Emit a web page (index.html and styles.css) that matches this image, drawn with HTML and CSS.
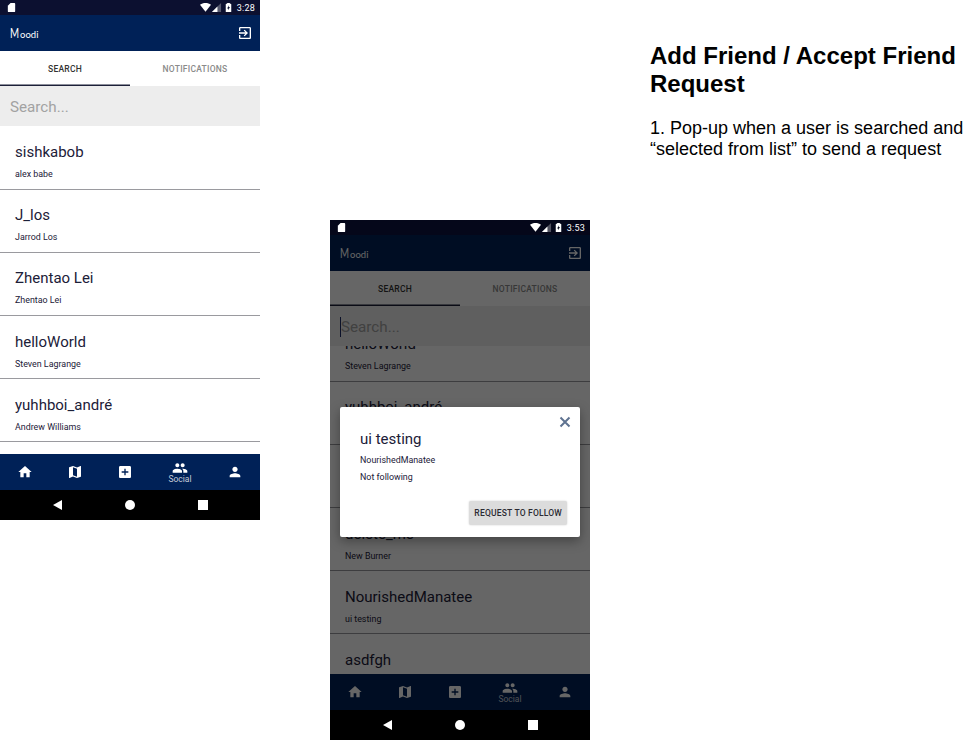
FILE: index.html
```html
<!DOCTYPE html>
<html lang="en">
<head>
    <meta charset="UTF-8">
    <meta name="viewport" content="width=device-width, initial-scale=1.0">
    <title>Add Friend / Accept Friend Request</title>
    <link rel="stylesheet" href="styles.css">
</head>
<body>
    <svg class="icon-defs" width="0" height="0">
        <symbol id="i-sd" viewBox="0 0 24 24"><path d="M18 2h-8L4 8v12c0 1.100.9 2 2 2h12c1.100 0 2-.9 2-2V4c0-1.100-.9-2-2-2z"/></symbol>
        <symbol id="i-wifi" viewBox="0 0 24 24"><path d="M12 21 24 6C20.500 3.300 16.500 2 12 2S3.500 3.300 0 6z"/></symbol>
        <symbol id="i-signal" viewBox="0 0 24 24"><path d="M2 22h20V2z" opacity=".3"/><path d="M2 22h12V10z"/></symbol>
        <symbol id="i-battery" viewBox="0 0 24 24"><path fill-rule="evenodd" d="M9 2h6v2h2c.6 0 1 .4 1 1v16c0 .6-.4 1-1 1H7c-.6 0-1-.4-1-1V5c0-.6.4-1 1-1h2zm4 5-4 7h2.500v4l3.500-7h-2.500z"/></symbol>
        <symbol id="i-exit" viewBox="0 0 24 24"><path d="M10.090 15.590 11.500 17l5-5-5-5-1.410 1.410L12.670 11H3v2h9.670l-2.580 2.590zM19 3H5c-1.110 0-2 .9-2 2v4h2V5h14v14H5v-4H3v4c0 1.100.89 2 2 2h14c1.100 0 2-.9 2-2V5c0-1.100-.9-2-2-2z"/></symbol>
        <symbol id="i-home" viewBox="0 0 24 24"><path d="M10 20v-6h4v6h5v-8h3L12 3 2 12h3v8z"/></symbol>
        <symbol id="i-map" viewBox="0 0 24 24"><path fill-rule="evenodd" d="m20.500 3-.16.03L15 5.100 9 3 3.360 4.900c-.21.070-.36.250-.36.480V20.500c0 .28.220.5.5.5l.16-.03L9 18.900l6 2.100 5.640-1.900c.21-.070.360-.25.360-.48V3.500c0-.28-.22-.5-.5-.5zM15 19l-6-2.110V5l6 2.110z"/></symbol>
        <symbol id="i-add" viewBox="0 0 24 24"><path d="M19 3H5c-1.110 0-2 .9-2 2v14c0 1.100.89 2 2 2h14c1.100 0 2-.9 2-2V5c0-1.100-.9-2-2-2zm-2 10h-4v4h-2v-4H7v-2h4V7h2v4h4v2z"/></symbol>
        <symbol id="i-people" viewBox="0 0 24 24"><path d="M16 11c1.660 0 2.990-1.340 2.990-3S17.660 5 16 5c-1.660 0-3 1.340-3 3s1.340 3 3 3zm-8 0c1.660 0 2.990-1.340 2.990-3S9.660 5 8 5C6.340 5 5 6.340 5 8s1.340 3 3 3zm0 2c-2.330 0-7 1.170-7 3.500V19h14v-2.500c0-2.330-4.670-3.500-7-3.500zm8 0c-.29 0-.62.020-.97.050 1.160.84 1.970 1.970 1.970 3.450V19h6v-2.500c0-2.330-4.670-3.500-7-3.500z"/></symbol>
        <symbol id="i-person" viewBox="0 0 24 24"><path d="M12 12c2.210 0 4-1.790 4-4s-1.790-4-4-4-4 1.790-4 4 1.790 4 4 4zm0 2c-2.670 0-8 1.340-8 4v2h16v-2c0-2.660-5.330-4-8-4z"/></symbol>
    </svg>

    <div class="board">
        <section class="phone">
            <div class="status-bar">
                <svg class="sd"><use href="#i-sd"/></svg>
                <span class="status-right">
                    <svg class="wifi"><use href="#i-wifi"/></svg>
                    <svg class="signal"><use href="#i-signal"/></svg>
                    <svg class="battery"><use href="#i-battery"/></svg>
                    <span class="clock">3:28</span>
                </span>
            </div>
            <header class="app-bar">
                <span class="logo"><span class="logo-m">M</span>oodi</span>
                <svg class="exit"><use href="#i-exit"/></svg>
            </header>
            <nav class="tabs">
                <span class="tab tab-active">SEARCH</span>
                <span class="tab">NOTIFICATIONS</span>
            </nav>
            <div class="search"><span class="search-text">Search...</span></div>
            <ul class="results">
                <li class="row"><div class="row-name">sishkabob</div><div class="row-sub">alex babe</div></li>
                <li class="row"><div class="row-name">J_los</div><div class="row-sub">Jarrod Los</div></li>
                <li class="row"><div class="row-name">Zhentao Lei</div><div class="row-sub">Zhentao Lei</div></li>
                <li class="row"><div class="row-name">helloWorld</div><div class="row-sub">Steven Lagrange</div></li>
                <li class="row"><div class="row-name">yuhhboi_andré</div><div class="row-sub">Andrew Williams</div></li>
            </ul>
            <nav class="bottom-nav">
                <span class="nav-item"><svg><use href="#i-home"/></svg></span>
                <span class="nav-item"><svg><use href="#i-map"/></svg></span>
                <span class="nav-item"><svg><use href="#i-add"/></svg></span>
                <span class="nav-item nav-social"><svg><use href="#i-people"/></svg><span class="nav-label">Social</span></span>
                <span class="nav-item"><svg><use href="#i-person"/></svg></span>
            </nav>
            <div class="system-nav">
                <span class="sys-back"></span>
                <span class="sys-home"></span>
                <span class="sys-recent"></span>
            </div>
        </section>

        <section class="phone phone-dimmed">
            <div class="status-bar">
                <svg class="sd"><use href="#i-sd"/></svg>
                <span class="status-right">
                    <svg class="wifi"><use href="#i-wifi"/></svg>
                    <svg class="signal"><use href="#i-signal"/></svg>
                    <svg class="battery"><use href="#i-battery"/></svg>
                    <span class="clock">3:53</span>
                </span>
            </div>
            <header class="app-bar">
                <span class="logo"><span class="logo-m">M</span>oodi</span>
                <svg class="exit"><use href="#i-exit"/></svg>
            </header>
            <nav class="tabs">
                <span class="tab tab-active">SEARCH</span>
                <span class="tab">NOTIFICATIONS</span>
            </nav>
            <div class="search search-focused"><span class="caret"></span><span class="search-text">Search...</span></div>
            <ul class="results results-scrolled">
                <li class="row"><div class="row-name">helloWorld</div><div class="row-sub">Steven Lagrange</div></li>
                <li class="row"><div class="row-name">yuhhboi_andré</div><div class="row-sub">Andrew Williams</div></li>
                <li class="row"><div class="row-name">Zhentao Lei</div><div class="row-sub">Zhentao Lei</div></li>
                <li class="row"><div class="row-name">delete_me</div><div class="row-sub">New Burner</div></li>
                <li class="row"><div class="row-name">NourishedManatee</div><div class="row-sub">ui testing</div></li>
                <li class="row"><div class="row-name">asdfgh</div><div class="row-sub">asdfgh</div></li>
            </ul>
            <nav class="bottom-nav">
                <span class="nav-item"><svg><use href="#i-home"/></svg></span>
                <span class="nav-item"><svg><use href="#i-map"/></svg></span>
                <span class="nav-item"><svg><use href="#i-add"/></svg></span>
                <span class="nav-item nav-social"><svg><use href="#i-people"/></svg><span class="nav-label">Social</span></span>
                <span class="nav-item"><svg><use href="#i-person"/></svg></span>
            </nav>
            <div class="system-nav">
                <span class="sys-back"></span>
                <span class="sys-home"></span>
                <span class="sys-recent"></span>
            </div>

            <div class="overlay"></div>
            <div class="modal">
                <span class="modal-close">
                    <svg viewBox="0 0 12 12"><path d="M1.500 1.500l9 9M10.500 1.500l-9 9"/></svg>
                </span>
                <div class="modal-title">ui testing</div>
                <div class="modal-line">NourishedManatee</div>
                <div class="modal-line">Not following</div>
                <div class="modal-actions"><span class="modal-button">REQUEST TO FOLLOW</span></div>
            </div>
        </section>

        <aside class="note">
            <h1 class="note-title">Add Friend / Accept Friend Request</h1>
            <p class="note-text">1. Pop-up when a user is searched and “selected from list” to send a request</p>
        </aside>
    </div>
</body>
</html>
```

FILE: styles.css
```css
* {
    box-sizing: border-box;
}

body {
    margin: 0;
    background-color: #fff;
    font-family: Roboto, "Liberation Sans", sans-serif;
    overflow: hidden;
}

.icon-defs {
    display: block;
    height: 0;
}

.board {
    display: flex;
    align-items: flex-start;
    width: 972px;
    height: 741px;
}

.phone {
    position: relative;
    display: flex;
    flex-direction: column;
    flex: none;
    width: 260px;
    height: 520px;
    overflow: hidden;
    background-color: #fff;
}

.phone-dimmed {
    margin: 220px 0 0 70px;
}

.status-bar {
    display: flex;
    justify-content: space-between;
    align-items: center;
    flex: none;
    height: 15px;
    padding: 0 0 0 6px;
    background-color: #0c1030;
    color: #fff;
    fill: #fff;
}

.phone-dimmed .status-bar {
    background-color: #05071a;
}

.sd {
    width: 11px;
    height: 11px;
}

.status-right {
    display: flex;
    align-items: center;
    padding-right: 5px;
}

.wifi {
    width: 13px;
    height: 11px;
}

.signal {
    width: 11px;
    height: 11px;
    margin-left: -1px;
}

.battery {
    width: 11px;
    height: 11px;
    margin-left: 1px;
}

.clock {
    margin-left: 2.500px;
    font-size: 9px;
    letter-spacing: 0.2px;
}

.app-bar {
    display: flex;
    justify-content: space-between;
    align-items: center;
    flex: none;
    height: 36px;
    padding: 0 7px 0 10px;
    background-color: #002157;
    color: #fff;
    fill: #fff;
}

.logo {
    font-family: Lato, "Liberation Sans", sans-serif;
    font-size: 9.500px;
}

.logo-m {
    display: inline-block;
    margin-right: -2px;
    font-size: 13px;
    transform: scaleX(0.75);
    transform-origin: left center;
}

.exit {
    width: 16px;
    height: 16px;
}

.tabs {
    display: flex;
    flex: none;
    height: 35px;
    background-color: #fff;
}

.tab {
    display: flex;
    flex: 1;
    justify-content: center;
    align-items: center;
    color: #8a8a8a;
    font-size: 8.500px;
    font-weight: 500;
    letter-spacing: 0.25px;
}

.tab-active {
    box-shadow: inset 0 -1.500px 0 #1c2038;
    color: #333;
}

.search {
    position: relative;
    z-index: 1;
    display: flex;
    align-items: center;
    flex: none;
    height: 40px;
    padding: 1px 0 0 10px;
    background-color: #ededed;
}

.search-text {
    color: #a2a2a2;
    font-size: 15.200px;
}

.caret {
    width: 1px;
    height: 20px;
    background-color: #1c2b66;
}

.results {
    flex: 1;
    margin: 0;
    padding: 0.500px 0 0;
    list-style: none;
    overflow: hidden;
}

.results-scrolled .row:first-child {
    margin-top: -28px;
}

.row {
    height: 63.200px;
    padding: 16.500px 15px 0;
    border-bottom: 1px solid #9a9a9f;
    color: #1c2038;
}

.row-name {
    font-size: 15px;
    line-height: 19px;
}

.row-sub {
    margin-top: 6px;
    font-size: 8.900px;
    line-height: 12px;
}

.bottom-nav {
    display: flex;
    flex: none;
    height: 36px;
    background-color: #002157;
    color: #fff;
    fill: #fff;
}

.nav-item {
    display: flex;
    flex-direction: column;
    flex: none;
    width: 50px;
    align-items: center;
    justify-content: center;
}

.nav-social {
    width: 60px;
}

.nav-item svg {
    width: 16px;
    height: 16px;
}

.nav-label {
    margin-top: -1px;
    color: #c5cbd8;
    font-size: 8.500px;
    line-height: 9px;
}

.system-nav {
    display: flex;
    justify-content: center;
    align-items: center;
    gap: 63px;
    flex: none;
    height: 30px;
    background-color: #000;
}

.sys-back {
    width: 0;
    height: 0;
    border-top: 5px solid transparent;
    border-bottom: 5px solid transparent;
    border-right: 9px solid #fff;
}

.sys-home {
    width: 10px;
    height: 10px;
    border-radius: 50%;
    background-color: #fff;
}

.sys-recent {
    width: 10px;
    height: 10px;
    background-color: #fff;
}

.overlay {
    position: absolute;
    top: 15px;
    right: 0;
    bottom: 30px;
    left: 0;
    z-index: 2;
    background-color: rgba(0, 0, 0, 0.6);
}

.modal {
    position: absolute;
    top: 187px;
    left: 10px;
    z-index: 3;
    width: 240px;
    height: 130px;
    padding: 22px 13px 0 20px;
    border-radius: 2px;
    background-color: #fff;
    box-shadow: 0 4px 12px rgba(0, 0, 0, 0.35);
    color: #1c2038;
}

.modal-close {
    position: absolute;
    top: 9px;
    right: 9px;
    width: 12px;
    height: 12px;
}

.modal-close svg {
    display: block;
    width: 12px;
    height: 12px;
    fill: none;
    stroke: #5f7391;
    stroke-width: 2;
}

.modal-title {
    font-size: 15px;
    line-height: 20px;
}

.modal-line {
    margin-top: 5px;
    font-size: 8.900px;
    line-height: 12px;
}

.modal-actions {
    display: flex;
    justify-content: flex-end;
    margin-top: 18px;
}

.modal-button {
    display: flex;
    align-items: center;
    height: 24px;
    padding: 0 5px;
    border-radius: 2px;
    background-color: #dcdcdc;
    box-shadow: 0 0 2px rgba(0, 0, 0, 0.2);
    color: #2b2b33;
    font-size: 8.500px;
    font-weight: 500;
    letter-spacing: 0.2px;
}

.note {
    flex: none;
    width: 322px;
    margin: 42px 0 0 60px;
    color: #000;
    font-family: "Liberation Sans", Arial, sans-serif;
}

.note-title {
    margin: 0;
    font-size: 24px;
    font-weight: 700;
    line-height: 28px;
}

.note-text {
    margin: 20px 0 0;
    font-size: 18px;
    line-height: 21px;
}
```
